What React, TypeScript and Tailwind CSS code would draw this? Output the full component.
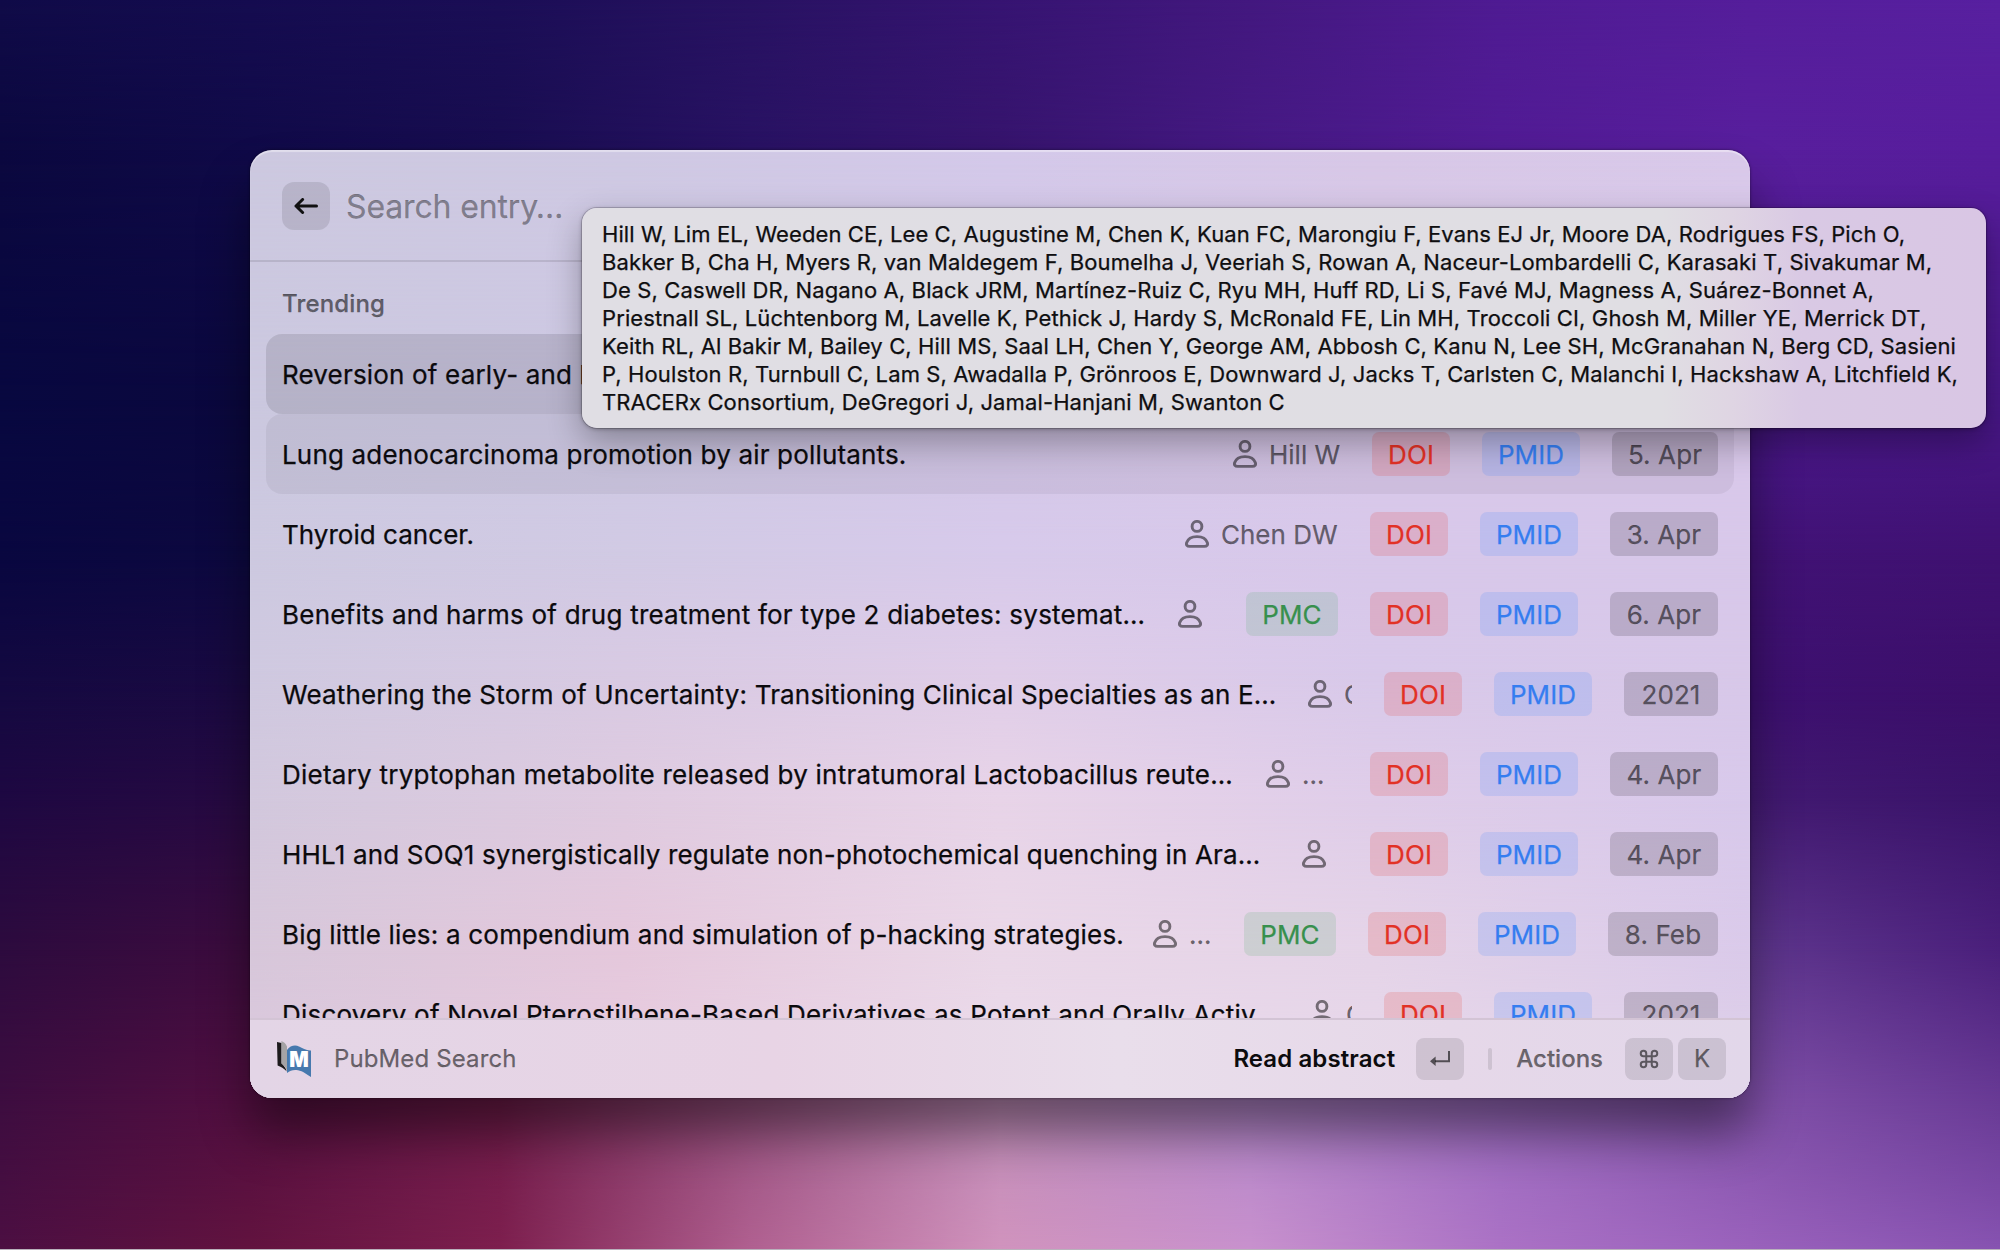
import { Command } from "lucide-react";

type MeshRow = { y: number; colors: string[] };

// Colours at evenly spaced columns; each row fades into the next one down.
const wallpaper: MeshRow[] = [
  { y: 0, colors: ["#100b48", "#150c50", "#1b0e56", "#281262", "#361472", "#43187f", "#4f1b93", "#551e9b", "#5820a0"] },
  { y: 150, colors: ["#0b083f", "#100a48", "#180d50", "#281263", "#36146d", "#451983", "#511b94", "#581e9d", "#571d9c"] },
  { y: 400, colors: ["#080840", "#0b083e", "#100a48", "#1c0e50", "#2a1060", "#3a1472", "#45168a", "#4a188b", "#481787"] },
  { y: 560, colors: ["#090740", "#0d0940", "#1a0a45", "#2a0d50", "#3a1060", "#3e1068", "#3f1070", "#411275", "#3f1171"] },
  { y: 700, colors: ["#150941", "#1c0a42", "#300c45", "#48104a", "#601a60", "#501568", "#421270", "#3d1070", "#3b0f69"] },
  { y: 800, colors: ["#1e0842", "#270a42", "#400c45", "#60184c", "#803a70", "#703a80", "#5a2a80", "#431a72", "#391369"] },
  { y: 950, colors: ["#2d0b3e", "#3d0c3e", "#601545", "#803560", "#a06a95", "#9568ac", "#7d4ca0", "#5f378e", "#4a1f7b"] },
  { y: 1100, colors: ["#3d0d40", "#520f40", "#701c4a", "#985280", "#c08cb8", "#b184c8", "#9a6abf", "#8050a8", "#683a95"] },
  { y: 1250, colors: ["#4c0f42", "#62133f", "#7d1f4e", "#b06090", "#d093bd", "#c891cd", "#ab72c5", "#9a62bc", "#8753b1"] },
];

const panel: MeshRow[] = [
  { y: 0, colors: ["#cdc9e0", "#cfc9e3", "#d4c9ea", "#d8c8e7", "#d9c9ea"] },
  { y: 250, colors: ["#cbc8df", "#cdc8e3", "#d2c6e6", "#d8c8e8", "#d9c8ea"] },
  { y: 400, colors: ["#cdc9e0", "#d1cae4", "#d7caeb", "#d8c8ea", "#d8c8ea"] },
  { y: 520, colors: ["#cfc9e0", "#d8cae3", "#dfcde8", "#d8c9ea", "#d8c8e9"] },
  { y: 650, colors: ["#d2c8dd", "#dfcbe0", "#e8d4e8", "#dfcde9", "#d8c9eb"] },
  { y: 800, colors: ["#d7c7da", "#e5c8dc", "#ead8e8", "#e5d4e8", "#dacaea"] },
  { y: 868, colors: ["#d9c8dc", "#e6cade", "#ead9e9", "#e6d6e9", "#dccde9"] },
];

function Mesh({ rows }: { rows: MeshRow[] }) {
  return (
    <div className="pointer-events-none absolute inset-0 overflow-hidden rounded-[inherit]">
      {rows.map((row, i) => {
        const mask = i === 0 ? undefined : `linear-gradient(to bottom, transparent ${rows[i - 1].y}px, black ${row.y}px)`;
        return (
          <div
            key={row.y}
            className="absolute inset-0"
            style={{ backgroundImage: `linear-gradient(to right, ${row.colors.join(", ")})`, maskImage: mask }}
          />
        );
      })}
    </div>
  );
}

function PersonIcon() {
  return (
    <svg viewBox="0 0 24 28" className="h-7 w-6 shrink-0 text-black/50" fill="none" stroke="currentColor" strokeWidth="2.9">
      <ellipse cx="12" cy="6.4" rx="4.9" ry="5" />
      <path d="M4.6 26.4H19.4C22 26.4 23 24.9 22.4 22.8C21.2 19 17.2 16.6 12 16.6C6.8 16.6 2.8 19 1.6 22.8C1 24.9 2 26.4 4.6 26.4Z" />
    </svg>
  );
}

function ReturnIcon() {
  return (
    <svg viewBox="0 0 20 16" className="h-4 w-5 text-black/60">
      <path d="M19 0V10.2H5" fill="none" stroke="currentColor" strokeWidth="2" />
      <path d="M0 10.2L5.6 5.4V15Z" fill="currentColor" />
    </svg>
  );
}

function PubMedLogo() {
  return (
    <svg viewBox="0 0 34 36" className="h-9 w-[34px] shrink-0">
      <path d="M0 1L4.6 2V22.6C6.6 24.4 8.6 26.6 9.8 30.6C7.2 27.4 3.6 25.4 0.6 24.4Z" fill="#1c1a1c" />
      <path d="M4.4 0C7 1 9 2.8 10 5.6V30.4C9.2 27 7.4 24.4 4.4 22.4Z" fill="#a5a3a5" />
      <path d="M10 9C13 4.6 18 3.6 22 5.4C25.6 7 29.4 9.8 34 9.4V36C29.6 33.6 26 30 21 29.2C16.6 28.6 13.2 29.2 10 32Z" fill="#4679ae" />
      <text x="22" y="26.4" textAnchor="middle" fontSize="21" textLength="19.5" lengthAdjust="spacingAndGlyphs" fill="white" className="font-['Inter'] font-black">
        M
      </text>
    </svg>
  );
}

const tones = {
  green: "bg-[#3caa5a]/15 text-[#37904d]",
  red: "bg-[#e63223]/16 text-[#e23125]",
  blue: "bg-[#2d82ff]/15 text-[#357df0]",
  gray: "bg-black/14 text-black/55",
};

function Tag({ tone, width, children }: { tone: keyof typeof tones; width: string; children: string }) {
  return (
    <span className={`flex h-11 shrink-0 items-center justify-center rounded-[7px] tracking-[0.1px] ${width} ${tones[tone]}`}>
      {children}
    </span>
  );
}

type Entry = {
  title: string;
  author?: string;
  authorWidth?: string;
  pmc?: boolean;
  date?: string;
  dateWidth?: string;
  state?: string;
  tracking?: string;
};

const entries: Entry[] = [
  { title: "Reversion of early- and l", state: "bg-black/[0.105]" },
  { title: "Lung adenocarcinoma promotion by air pollutants.", author: "Hill W", authorWidth: "w-[107px]", date: "5. Apr", dateWidth: "w-[106px]", state: "bg-black/[0.05]" },
  { title: "Thyroid cancer.", author: "Chen DW", authorWidth: "w-[153px]", date: "3. Apr", dateWidth: "w-[108px]", tracking: "tracking-[0.03px]" },
  { title: "Benefits and harms of drug treatment for type 2 diabetes: systemat…", author: "", authorWidth: "w-9", pmc: true, date: "6. Apr", dateWidth: "w-[108px]", tracking: "tracking-[0.23px]" },
  { title: "Weathering the Storm of Uncertainty: Transitioning Clinical Specialties as an E…", author: "C", authorWidth: "w-11", date: "2021", dateWidth: "w-[94px]" },
  { title: "Dietary tryptophan metabolite released by intratumoral Lactobacillus reute…", author: "…", authorWidth: "w-[72px]", date: "4. Apr", dateWidth: "w-[108px]", tracking: "tracking-[0.24px]" },
  { title: "HHL1 and SOQ1 synergistically regulate non-photochemical quenching in Ara…", author: "", authorWidth: "w-9", date: "4. Apr", dateWidth: "w-[108px]" },
  { title: "Big little lies: a compendium and simulation of p-hacking strategies.", author: "…", authorWidth: "w-[59px]", pmc: true, date: "8. Feb", dateWidth: "w-[110px]", tracking: "tracking-[0.2px]" },
  { title: "Discovery of Novel Pterostilbene-Based Derivatives as Potent and Orally Activ…", author: "C", authorWidth: "w-[42px]", date: "2021", dateWidth: "w-[94px]", tracking: "tracking-[0.2px]" },
];

function Row({ entry }: { entry: Entry }) {
  return (
    <li className={`flex h-20 items-center rounded-2xl px-4 text-[26px] ${entry.state ?? ""}`}>
      <span className={`min-w-0 flex-1 overflow-hidden whitespace-nowrap text-[#0b0a0d] ${entry.tracking ?? "tracking-[0.17px]"}`}>{entry.title}</span>
      {entry.date && (
        <div className="flex items-center gap-8">
          <div className={`flex items-center gap-3 overflow-hidden whitespace-nowrap text-black/55 ${entry.authorWidth}`}>
            <PersonIcon />
            <span>{entry.author}</span>
          </div>
          {entry.pmc && <Tag tone="green" width="w-[92px]">PMC</Tag>}
          <Tag tone="red" width="w-[78px]">DOI</Tag>
          <Tag tone="blue" width="w-[98px]">PMID</Tag>
          <Tag tone="gray" width={entry.dateWidth ?? ""}>{entry.date}</Tag>
        </div>
      )}
    </li>
  );
}

const tooltipLines = [
  "Hill W, Lim EL, Weeden CE, Lee C, Augustine M, Chen K, Kuan FC, Marongiu F, Evans EJ Jr, Moore DA, Rodrigues FS, Pich O,",
  "Bakker B, Cha H, Myers R, van Maldegem F, Boumelha J, Veeriah S, Rowan A, Naceur-Lombardelli C, Karasaki T, Sivakumar M,",
  "De S, Caswell DR, Nagano A, Black JRM, Martínez-Ruiz C, Ryu MH, Huff RD, Li S, Favé MJ, Magness A, Suárez-Bonnet A,",
  "Priestnall SL, Lüchtenborg M, Lavelle K, Pethick J, Hardy S, McRonald FE, Lin MH, Troccoli CI, Ghosh M, Miller YE, Merrick DT,",
  "Keith RL, Al Bakir M, Bailey C, Hill MS, Saal LH, Chen Y, George AM, Abbosh C, Kanu N, Lee SH, McGranahan N, Berg CD, Sasieni",
  "P, Houlston R, Turnbull C, Lam S, Awadalla P, Grönroos E, Downward J, Jacks T, Carlsten C, Malanchi I, Hackshaw A, Litchfield K,",
  "TRACERx Consortium, DeGregori J, Jamal-Hanjani M, Swanton C",
];

export default function App() {
  return (
    <div className="relative h-[1250px] w-[2000px] overflow-hidden border-b border-[#b9b2bc] px-[250px] pt-[150px] font-['Inter',sans-serif] [-webkit-text-stroke:0.25px_currentColor]">
      <Mesh rows={wallpaper} />

      <main className="relative flex h-[948px] flex-col overflow-visible rounded-[22px] shadow-[0_36px_50px_rgba(0,0,0,0.46),0_0_3px_rgba(0,0,0,0.5)]">
        <Mesh rows={panel} />
        <div className="pointer-events-none absolute inset-0 z-10 rounded-[22px] shadow-[inset_0_2px_1px_rgba(255,255,255,0.4)]" />

        <header className="relative flex h-28 shrink-0 items-center border-b-2 border-black/10 px-8 pt-0.5">
          <button className="flex size-12 items-center justify-center rounded-xl bg-black/10">
            <svg viewBox="0 0 24 16" className="h-4 w-6" fill="none" stroke="#111" strokeWidth="3" strokeLinecap="round" strokeLinejoin="round">
              <path d="M22.5 8H2M8.6 1.5L2 8L8.6 14.5" />
            </svg>
          </button>
          <span className="pt-0.5 pl-4 text-[32px] tracking-[-0.14px] text-black/38">Search entry…</span>
        </header>

        <section className="relative flex min-h-0 flex-1 flex-col overflow-hidden px-4">
          <h2 className="flex h-[72px] shrink-0 items-center px-4 pt-3 text-2xl font-medium tracking-[0.14px] text-black/55">Trending</h2>
          <ul>
            {entries.map((entry) => (
              <Row key={entry.title} entry={entry} />
            ))}
          </ul>
        </section>

        <footer className="relative flex h-20 shrink-0 items-center rounded-b-[22px] border-t-2 border-[#d3c4d5] bg-[linear-gradient(to_right,#e3d5e6,#e8d4e5_35%,#e9deeb_58%,#e6d8e9_80%,#e2d7ea)] pr-6 pl-[27px] text-2xl">
          <PubMedLogo />
          <span className="pl-[23px] tracking-[0.12px] text-black/55">PubMed Search</span>
          <span className="ml-auto font-semibold tracking-[0.1px] text-[#0c0b0d] [-webkit-text-stroke:0]">Read abstract</span>
          <kbd className="ml-[21px] flex h-[42px] w-12 items-center justify-center rounded-lg bg-black/10"><ReturnIcon /></kbd>
          <span className="ml-6 h-[22px] w-1 rounded-full bg-black/10" />
          <span className="ml-6 font-medium text-black/55">Actions</span>
          <kbd className="ml-[22px] flex h-[42px] w-12 items-center justify-center rounded-lg bg-black/10">
            <Command size={22} strokeWidth={2.2} className="text-black/55" />
          </kbd>
          <kbd className="ml-[5px] flex h-[42px] w-12 items-center justify-center rounded-lg bg-black/10 font-['Inter'] text-2xl text-black/55">K</kbd>
        </footer>
      </main>

      <div
        role="tooltip"
        className="absolute top-[208px] left-[582px] z-20 h-[220px] w-[1404px] rounded-[15px] bg-[linear-gradient(to_right,#e0dee4_0,#e0dee3_1080px,#dfd5e3_1150px,#d9c9e4_1220px,#d9c6e4_100%)] px-5 pt-3 text-[22px] leading-7 tracking-[0.12px] whitespace-nowrap text-[#0f0e10] shadow-[0_14px_34px_rgba(0,0,0,0.3),0_0_0_1px_rgba(0,0,0,0.16),0_1px_4px_rgba(0,0,0,0.3)]"
      >
        {tooltipLines.map((line) => (
          <p key={line} className="first:tracking-[0.09px]">{line}</p>
        ))}
      </div>
    </div>
  );
}
